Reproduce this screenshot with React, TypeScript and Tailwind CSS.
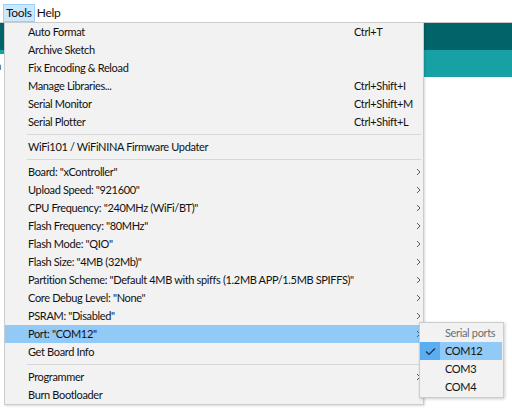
import React from "react";

type Item =
  | { kind: "item"; label: string; shortcut?: string; sub?: boolean; active?: boolean }
  | { kind: "sep" };

const items: Item[] = [
  { kind: "item", label: "Auto Format", shortcut: "Ctrl+T" },
  { kind: "item", label: "Archive Sketch" },
  { kind: "item", label: "Fix Encoding & Reload" },
  { kind: "item", label: "Manage Libraries...", shortcut: "Ctrl+Shift+I" },
  { kind: "item", label: "Serial Monitor", shortcut: "Ctrl+Shift+M" },
  { kind: "item", label: "Serial Plotter", shortcut: "Ctrl+Shift+L" },
  { kind: "sep" },
  { kind: "item", label: "WiFi101 / WiFiNINA Firmware Updater" },
  { kind: "sep" },
  { kind: "item", label: 'Board: "xController"', sub: true },
  { kind: "item", label: 'Upload Speed: "921600"', sub: true },
  { kind: "item", label: 'CPU Frequency: "240MHz (WiFi/BT)"', sub: true },
  { kind: "item", label: 'Flash Frequency: "80MHz"', sub: true },
  { kind: "item", label: 'Flash Mode: "QIO"', sub: true },
  { kind: "item", label: 'Flash Size: "4MB (32Mb)"', sub: true },
  {
    kind: "item",
    label: 'Partition Scheme: "Default 4MB with spiffs (1.2MB APP/1.5MB SPIFFS)"',
    sub: true,
  },
  { kind: "item", label: 'Core Debug Level: "None"', sub: true },
  { kind: "item", label: 'PSRAM: "Disabled"', sub: true },
  { kind: "item", label: 'Port: "COM12"', sub: true, active: true },
  { kind: "item", label: "Get Board Info" },
  { kind: "sep" },
  { kind: "item", label: "Programmer", sub: true },
  { kind: "item", label: "Burn Bootloader" },
];

const Chevron = () => (
  <svg width="5" height="8" viewBox="0 0 5 8" className="shrink-0">
    <path d="M1 1 L4 4 L1 7" fill="none" stroke="#5a5a5a" strokeWidth="1" />
  </svg>
);

const Check = () => (
  <svg width="11" height="9" viewBox="0 0 11 9">
    <path d="M1 4.5 L4 7.5 L10 1.5" fill="none" stroke="#1b2f4f" strokeWidth="1.2" />
  </svg>
);

const MenuRow = ({ item }: { item: Item }) => {
  if (item.kind === "sep") {
    return (
      <div className="h-[7px] flex items-center pl-[22px] pr-[2px]">
        <div className="h-px w-full bg-[#d7d7d7]" />
      </div>
    );
  }
  return (
    <div
      className={
        item.active
          ? "h-[18px] flex items-center bg-[#91c9f7] pl-[23px] pr-[2px]"
          : "h-[18px] flex items-center pl-[23px] pr-[2px]"
      }
    >
      <span className="flex-1 whitespace-nowrap">{item.label}</span>
      {item.shortcut && (
        <span className="w-[67px] whitespace-nowrap">{item.shortcut}</span>
      )}
      {item.sub && (
        <span className="w-[67px] flex justify-end">
          <Chevron />
        </span>
      )}
    </div>
  );
};

export default function App() {
  return (
    <div className="relative w-[512px] h-[409px] bg-white overflow-hidden text-[11px] tracking-[-0.35px] text-[#111] font-['Lato','Segoe_UI',sans-serif]">
      {/* menu bar */}
      <div className="h-[23px] border-b border-[#c8c8c8] flex items-end pl-[3px] text-[12px] tracking-[-0.3px]">
        <div className="h-[18px] px-[2px] flex items-center bg-[#cce8ff] border border-[#99d1ff]">
          Tools
        </div>
        <div className="h-[18px] px-[2px] flex items-center">Help</div>
      </div>
      {/* sketch window behind */}
      <div className="h-[27px] bg-[#006468]" />
      <div className="flex">
        <div className="w-[4px] h-[4px] bg-[#17a1a5]" />
        <div className="flex-1 h-[27px] bg-[#17a1a5] ml-[420px]" />
      </div>
      <div className="absolute left-[-4px] top-[58px] text-[#555]">a</div>

      {/* tools dropdown */}
      <div className="absolute left-[4px] top-[22px] w-[420px] bg-[#f2f2f2] border border-[#cccccc] shadow-[1px_1px_2px_rgba(0,0,0,0.15)]">
        {items.map((it, i) => (
          <MenuRow key={i} item={it} />
        ))}
      </div>

      {/* port submenu */}
      <div className="absolute left-[419px] top-[322px] w-[85px] bg-[#f2f2f2] border border-[#cccccc] shadow-[1px_1px_3px_rgba(0,0,0,0.2)] py-[1px] pr-[1px] whitespace-nowrap">
        <div className="h-[18px] flex items-center pl-[25px] text-[#6d6d6d]">Serial ports</div>
        <div className="h-[18px] flex items-center bg-[#91c9f7]">
          <div className="w-[20px] h-full flex items-center justify-center bg-[#5aaef0]">
            <Check />
          </div>
          <span className="pl-[5px]">COM12</span>
        </div>
        <div className="h-[18px] flex items-center pl-[25px]">COM3</div>
        <div className="h-[18px] flex items-center pl-[25px]">COM4</div>
      </div>
    </div>
  );
}
